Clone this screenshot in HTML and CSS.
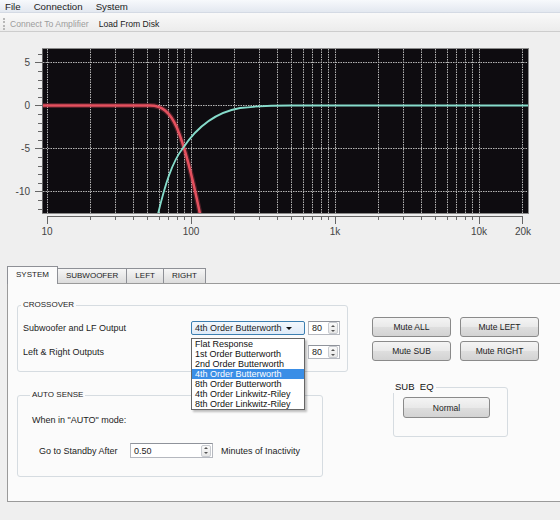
FILE: index.html
```html
<!DOCTYPE html>
<html lang="en">
<head>
    <meta charset="UTF-8">
    <meta name="viewport" content="width=device-width, initial-scale=1.0">
    <link rel="stylesheet" href="styles.css">
</head>
<body>

<div class="menubar">
    <span>File</span>
    <span>Connection</span>
    <span>System</span>
</div>

<div class="toolbar">
    <span class="grip"></span>
    <span class="tool disabled">Connect To Amplifier</span>
    <span class="tool">Load From Disk</span>
</div>

<div class="chart">
    <!-- viewBox uses page coordinates so the plot lines up with the window -->
    <svg viewBox="0 32 560 234" width="560" height="234">
        <defs>
            <clipPath id="plotClip"><rect x="43" y="49" width="485" height="164"/></clipPath>
        </defs>
        <rect class="plot-bg" x="42.5" y="48.5" width="486" height="165"/>
        <path class="grid" d="M47.5 49V213M90.5 49V213M115.5 49V213M133.5 49V213M147.5 49V213M159.5 49V213M168.5 49V213M177.5 49V213M184.5 49V213M191.5 49V213M234.5 49V213M259.5 49V213M277.5 49V213M291.5 49V213M303.5 49V213M312.5 49V213M321.5 49V213M328.5 49V213M335.5 49V213M378.5 49V213M403.5 49V213M421.5 49V213M435.5 49V213M447.5 49V213M456.5 49V213M465.5 49V213M472.5 49V213M479.5 49V213M522.5 49V213"/>
        <path class="grid" d="M43 62.5H528M43 105.5H528M43 148.5H528M43 191.5H528"/>

        <!-- y axis -->
        <path class="axis" d="M42.5 49V213M35 62.5H42M35 105.5H42M35 148.5H42M35 191.5H42M38 54.5H42M38 71.5H42M38 80.5H42M38 88.5H42M38 97.5H42M38 114.5H42M38 123.5H42M38 131.5H42M38 140.5H42M38 157.5H42M38 166.5H42M38 174.5H42M38 183.5H42M38 200.5H42M38 209.5H42"/>
        <text class="lbl" x="30" y="66" text-anchor="end">5</text>
        <text class="lbl" x="30" y="109" text-anchor="end">0</text>
        <text class="lbl" x="30" y="152" text-anchor="end">-5</text>
        <text class="lbl" x="30" y="195" text-anchor="end">-10</text>

        <!-- x axis -->
        <path class="axis" d="M47 216.5H523M47.5 216V224M191.5 216V224M335.5 216V224M479.5 216V224M522.5 216V224M90.5 216V220M115.5 216V220M133.5 216V220M147.5 216V220M159.5 216V220M168.5 216V220M177.5 216V220M184.5 216V220M234.5 216V220M259.5 216V220M277.5 216V220M291.5 216V220M303.5 216V220M312.5 216V220M321.5 216V220M328.5 216V220M378.5 216V220M403.5 216V220M421.5 216V220M435.5 216V220M447.5 216V220M456.5 216V220M465.5 216V220M472.5 216V220"/>
        <text class="lbl" x="47" y="235" text-anchor="middle">10</text>
        <text class="lbl" x="191" y="235" text-anchor="middle">100</text>
        <text class="lbl" x="335" y="235" text-anchor="middle">1k</text>
        <text class="lbl" x="479" y="235" text-anchor="middle">10k</text>
        <text class="lbl" x="523" y="235" text-anchor="middle">20k</text>

        <g clip-path="url(#plotClip)">
            <path class="lp-glow" d="M43 105.5H150C162 105.5 170 112 177 128C182 140 190 165 200 214"/>
            <path class="lp" d="M43 105.5H150C162 105.5 170 112 177 128C182 140 190 165 200 214"/>
            <path class="hp" d="M158 214C165 185 172 162 183 148C195 130 212 113 240 108C258 106 272 105.5 290 105.5H528"/>
        </g>
    </svg>
</div>

<div class="tabs">
    <div class="tab active">SYSTEM</div>
    <div class="tab">SUBWOOFER</div>
    <div class="tab">LEFT</div>
    <div class="tab">RIGHT</div>
</div>

<div class="panel">
    <div class="col-left">
        <fieldset class="group crossover">
            <legend>CROSSOVER</legend>
            <div class="xo-row">
                <span>Subwoofer and LF Output</span>
                <div class="combo open">
                    <span>4th Order Butterworth</span>
                    <span class="caret"></span>
                    <div class="combo-list">
                        <div>Flat Response</div>
                        <div>1st Order Butterworth</div>
                        <div>2nd Order Butterworth</div>
                        <div class="sel">4th Order Butterworth</div>
                        <div>8th Order Butterworth</div>
                        <div>4th Order Linkwitz-Riley</div>
                        <div>8th Order Linkwitz-Riley</div>
                    </div>
                </div>
                <div class="spin">
                    <span class="val">80</span>
                    <span class="arrows"><i class="up"></i><i class="down"></i></span>
                </div>
            </div>
            <div class="xo-row">
                <span>Left &amp; Right Outputs</span>
                <!-- covered by the open list above -->
                <div class="combo"></div>
                <div class="spin">
                    <span class="val">80</span>
                    <span class="arrows"><i class="up"></i><i class="down"></i></span>
                </div>
            </div>
        </fieldset>

        <fieldset class="group autosense">
            <legend>AUTO SENSE</legend>
            <div class="as-note">When in "AUTO" mode:</div>
            <div class="as-row">
                <span class="as-label">Go to Standby After</span>
                <div class="spin wide">
                    <span class="val">0.50</span>
                    <span class="arrows"><i class="up"></i><i class="down"></i></span>
                </div>
                <span class="as-unit">Minutes of Inactivity</span>
            </div>
        </fieldset>
    </div>

    <div class="col-right">
        <div class="mute-grid">
            <button class="btn">Mute ALL</button>
            <button class="btn">Mute LEFT</button>
            <button class="btn">Mute SUB</button>
            <button class="btn">Mute RIGHT</button>
        </div>
        <fieldset class="group subeq">
            <legend>SUB&nbsp; EQ</legend>
            <button class="btn normal">Normal</button>
        </fieldset>
    </div>
</div>

</body>
</html>
```

FILE: styles.css
```css
* {
    box-sizing: border-box;
}

body {
    margin: 0;
    width: 560px;
    height: 520px;
    overflow: hidden;
    background: #efefef;
    font-family: "Liberation Sans", Arial, sans-serif;
    font-size: 9px;
    color: #1c1c1c;
}

/* menu + toolbar */
.menubar {
    height: 13px;
    display: flex;
    align-items: center;
    gap: 13px;
    padding-left: 5px;
    font-size: 9.7px;
    background: linear-gradient(#f7f9fc, #e3e8f0);
    border-bottom: 1px solid #d4dae4;
}

.toolbar {
    height: 19px;
    display: flex;
    align-items: center;
    padding: 3px 0 0 3px;
    font-size: 8.6px;
    background: linear-gradient(#f9f9f9, #ececec);
    border-bottom: 1px solid #cdcdcd;
}

.grip {
    width: 2px;
    height: 12px;
    border-left: 2px dotted #b8b8b8;
    margin-right: 5px;
}

.tool {
    margin-right: 10px;
}

.tool.disabled {
    color: #9c9c9c;
}

/* response plot */
.chart svg {
    display: block;
}

.plot-bg {
    fill: #0e0c10;
    stroke: #8a8a8a;
    stroke-width: 1;
}

.grid {
    fill: none;
    stroke: #b4b4b4;
    stroke-width: 1;
    stroke-dasharray: 1.5 1;
}

.axis {
    fill: none;
    stroke: #666;
    stroke-width: 1;
}

.lbl {
    font-family: "Liberation Sans", Arial, sans-serif;
    font-size: 10px;
    fill: #444;
}

.lp-glow {
    fill: none;
    stroke: #e04a5a;
    stroke-width: 5;
    opacity: 0.3;
}

.lp {
    fill: none;
    stroke: #e4505e;
    stroke-width: 2.5;
}

.hp {
    fill: none;
    stroke: #86dccb;
    stroke-width: 1.8;
}

/* tabs */
.tabs {
    height: 17px;
    display: flex;
    align-items: flex-end;
    padding-left: 7px;
}

.tab {
    height: 15px;
    padding: 0 8px;
    margin-left: -1px;
    border: 1px solid #8e9096;
    border-bottom: none;
    background: linear-gradient(#f6f6f6, #dcdcdc);
    font-size: 8px;
    line-height: 14px;
    color: #222;
}

.tab.active {
    height: 18px;
    margin-left: 0;
    margin-bottom: -1px;
    position: relative;
    z-index: 1;
    background: #fbfbfb;
    line-height: 15px;
}

.panel {
    height: 219px;
    margin: 0 -6px 0 7px;
    padding: 16px 0 0 9px;
    display: flex;
    border: 1px solid #9a9a9a;
    background: #fbfbfb;
}

/* group boxes */
.group {
    margin: 0;
    min-width: 0;
    border: 1px solid #d6dce1;
    border-radius: 3px;
}

.group legend {
    padding: 0 2px;
    margin-left: -2px;
    font-size: 8px;
    line-height: 10px;
    color: #222;
}

.col-left {
    width: 331px;
}

.crossover {
    width: 331px;
    padding: 11px 0 12px 5px;
}

.xo-row {
    display: grid;
    grid-template-columns: 165px 114px 32px;
    column-gap: 3px;
    align-items: center;
    height: 14px;
}

.xo-row + .xo-row {
    margin-top: 10px;
}

.combo {
    position: relative;
    height: 14px;
    display: flex;
    align-items: center;
    justify-content: space-between;
    padding-left: 3px;
    border: 1px solid #a9b3bd;
    border-radius: 2px;
    background: linear-gradient(#fafafa, #e9e9e9);
}

.combo.open {
    border-color: #3c7fb1;
    background: linear-gradient(#f3f8fd, #dfebf8);
    z-index: 3;
}

.caret {
    margin-right: 12px;
    border-left: 3px solid transparent;
    border-right: 3px solid transparent;
    border-top: 3px solid #111;
}

.combo-list {
    position: absolute;
    top: 16px;
    left: -1px;
    width: 114px;
    border: 1px solid #666;
    background: #fff;
    box-shadow: 2px 2px 2px rgba(0, 0, 0, 0.25);
}

.combo-list div {
    height: 10px;
    line-height: 10px;
    padding-left: 3px;
    color: #111;
    white-space: nowrap;
}

.combo-list .sel {
    background: #3a8ee6;
    color: #fff;
}

.spin {
    height: 14px;
    display: flex;
    align-items: center;
    border: 1px solid #b5b8bf;
    border-top-color: #8f939b;
    background: #fff;
}

.spin .val {
    flex: 1;
    padding-left: 3px;
}

.spin .arrows {
    width: 10px;
    height: 12px;
    margin-right: 1px;
    display: flex;
    flex-direction: column;
    border: 1px solid #c8cbd0;
    border-radius: 2px;
    background: linear-gradient(#fafafa, #e6e6e6);
}

.arrows i {
    flex: 1;
    display: flex;
    align-items: center;
    justify-content: center;
}

.arrows i::after {
    content: "";
    border-left: 2px solid transparent;
    border-right: 2px solid transparent;
}

.arrows .up::after {
    border-bottom: 2px solid #555;
}

.arrows .down::after {
    border-top: 2px solid #555;
}

.autosense {
    width: 306px;
    margin-top: 18px;
    padding: 14px 0 18px 14px;
}

.as-note {
    line-height: 12px;
}

.as-row {
    display: flex;
    align-items: center;
    margin: 17px 0 0 7px;
}

.as-label {
    width: 91px;
}

.spin.wide {
    width: 83px;
    height: 15px;
}

.as-unit {
    margin-left: 8px;
}

/* right column */
.col-right {
    margin-left: 24px;
    padding-top: 17px;
}

.mute-grid {
    display: grid;
    grid-template-columns: 79px 79px;
    gap: 4px 9px;
}

.btn {
    height: 20px;
    padding: 0;
    border: 1px solid #8a8a8a;
    border-radius: 3px;
    background: linear-gradient(#f4f4f4, #e9e9e9 50%, #dedede 51%, #d3d3d3);
    font-family: "Liberation Sans", Arial, sans-serif;
    font-size: 8.5px;
    color: #1c1c1c;
}

.subeq {
    width: 115px;
    margin: 20px 0 0 21px;
    padding: 4px 0 18px 9px;
}

.subeq legend {
    margin-left: -10px;
    font-size: 9.5px;
    line-height: 12px;
    color: #111;
}

.btn.normal {
    width: 87px;
    height: 21px;
}
```
